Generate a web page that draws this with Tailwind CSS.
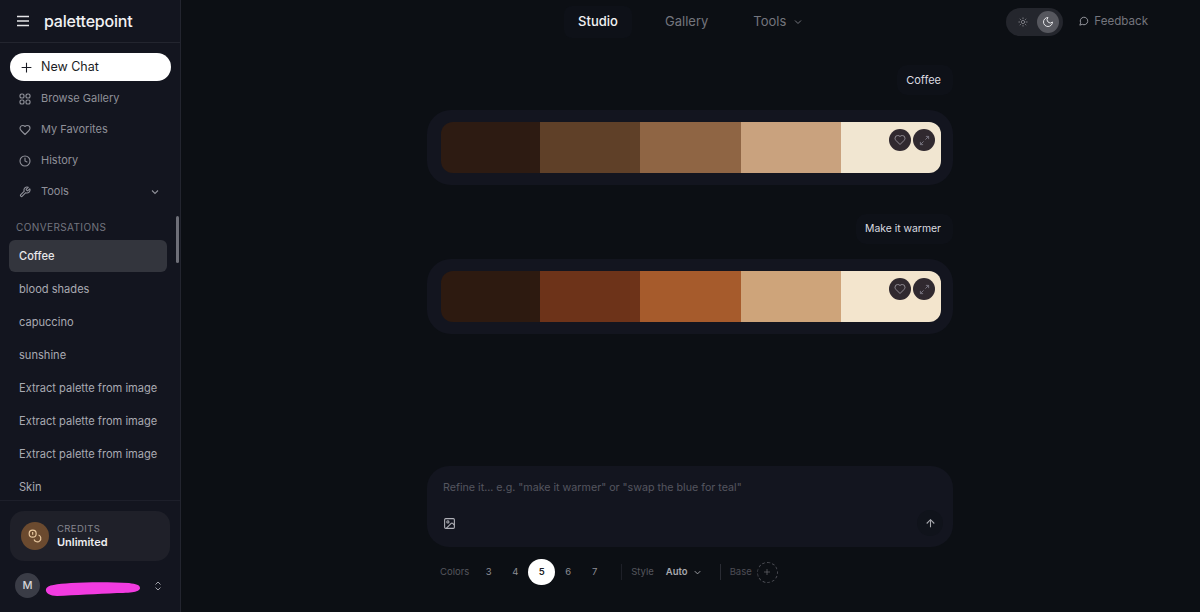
<!DOCTYPE html>
<html lang="en">
<head>
    <meta charset="UTF-8">
    <meta name="viewport" content="width=device-width, initial-scale=1.0">
    <title>palettepoint</title>
    <script src="https://cdn.jsdelivr.net/npm/@tailwindcss/browser@4"></script>
</head>
<body class="h-screen overflow-hidden bg-[#0c0f14] text-white font-[Inter,sans-serif]">
<div class="flex h-[612px]">

    <!-- Sidebar -->
    <aside class="relative flex w-[181px] shrink-0 flex-col border-r border-[#23252f] bg-[#13151f]">
        <div class="flex h-[43px] shrink-0 items-center gap-[14px] border-b border-[#23252f] pl-[16px]">
            <svg class="h-[14px] w-[14px] text-[#e5e5e8]" viewBox="0 0 14 14" fill="none" stroke="currentColor" stroke-width="1.4"><path d="M1 2.5h12M1 7h12M1 11.5h12"/></svg>
            <span class="text-[16px] font-medium tracking-[-0.2px] text-[#f1f1f3]">palettepoint</span>
        </div>

        <div class="flex shrink-0 flex-col px-[10px] pt-[10px]">
            <button class="flex h-[28px] w-[161px] items-center gap-[8px] rounded-full bg-white pl-[10px] pt-[1px] text-[12.5px] text-[#1a1c24]">
                <svg class="h-[13px] w-[13px]" viewBox="0 0 24 24" fill="none" stroke="currentColor" stroke-width="2"><path d="M12 3v18M3 12h18"/></svg>
                New Chat
            </button>
            <nav class="mt-[2px] flex flex-col text-[11px] text-[#8f9099]">
                <a class="flex h-[31px] items-center gap-[10px] pl-[9px]">
                    <svg class="h-[12px] w-[12px]" viewBox="0 0 12 12" fill="none" stroke="currentColor" stroke-width="1.2"><rect x="1" y="1" width="4" height="4" rx="1.6"/><rect x="7" y="1" width="4" height="4" rx="1.6"/><rect x="1" y="7" width="4" height="4" rx="1.6"/><rect x="7" y="7" width="4" height="4" rx="1.6"/></svg>
                    Browse Gallery
                </a>
                <a class="flex h-[31px] items-center gap-[10px] pl-[9px]">
                    <svg class="h-[12px] w-[12px]" viewBox="0 0 24 24" fill="none" stroke="currentColor" stroke-width="2.2" stroke-linejoin="round"><path d="M19 14c1.49-1.46 3-3.21 3-5.5A5.5 5.5 0 0 0 16.5 3c-1.76 0-3 .5-4.5 2-1.5-1.5-2.74-2-4.5-2A5.5 5.5 0 0 0 2 8.5c0 2.3 1.5 4.05 3 5.5l7 7Z"/></svg>
                    My Favorites
                </a>
                <a class="flex h-[31px] items-center gap-[10px] pl-[9px]">
                    <svg class="h-[12px] w-[12px]" viewBox="0 0 24 24" fill="none" stroke="currentColor" stroke-width="2.2" stroke-linecap="round"><circle cx="12" cy="12" r="10"/><path d="M12 6v6l4 2"/></svg>
                    History
                </a>
                <a class="flex h-[31px] items-center gap-[10px] pl-[9px] pr-[9px]">
                    <svg class="h-[12px] w-[12px]" viewBox="0 0 24 24" fill="none" stroke="currentColor" stroke-width="2.2" stroke-linejoin="round"><path d="M14.7 6.3a1 1 0 0 0 0 1.4l1.6 1.6a1 1 0 0 0 1.4 0l3.77-3.77a6 6 0 0 1-7.94 7.94l-6.91 6.91a2.12 2.12 0 0 1-3-3l6.91-6.91a6 6 0 0 1 7.94-7.94l-3.76 3.76z"/></svg>
                    Tools
                    <svg class="ml-auto h-[12px] w-[12px]" viewBox="0 0 24 24" fill="none" stroke="currentColor" stroke-width="2.2"><path d="m6 9 6 6 6-6"/></svg>
                </a>
            </nav>
        </div>

        <div class="relative flex min-h-0 flex-1 flex-col overflow-hidden pl-[9px] pr-[13px]">
            <p class="mt-[13px] pl-[7px] text-[10px] leading-[14px] tracking-[0.4px] text-[#74757f]">CONVERSATIONS</p>
            <ul class="mt-[6px] flex flex-col text-[11.1px] text-[#a9aab2]">
                <li class="flex h-[32px] items-center rounded-[6px] bg-[#33353d] pl-[10px] font-medium text-[#e8e8eb]">Coffee</li>
                <li class="mt-[1px] flex h-[33px] items-center pl-[10px]">blood shades</li>
                <li class="flex h-[33px] items-center pl-[10px]">capuccino</li>
                <li class="flex h-[33px] items-center pl-[10px]">sunshine</li>
                <li class="flex h-[33px] items-center whitespace-nowrap pl-[10px]">Extract palette from image</li>
                <li class="flex h-[33px] items-center whitespace-nowrap pl-[10px]">Extract palette from image</li>
                <li class="flex h-[33px] items-center whitespace-nowrap pl-[10px]">Extract palette from image</li>
                <li class="flex h-[33px] items-center pl-[10px]">Skin</li>
            </ul>
            <span class="absolute right-[1px] top-[9px] h-[47px] w-[3px] rounded-full bg-[#6e6f78]"></span>
        </div>

        <div class="shrink-0 border-t border-[#1d1f2a] px-[10px] pb-[14px] pt-[10px]">
            <div class="flex h-[50px] items-center gap-[8px] rounded-[14px] bg-[#1f2029] pl-[11px]">
                <span class="flex h-[28px] w-[28px] items-center justify-center rounded-full bg-[#6b4a2f] text-[#eac9a0]">
                    <svg class="h-[14px] w-[14px]" viewBox="0 0 24 24" fill="none" stroke="currentColor" stroke-width="2"><circle cx="8" cy="8" r="6"/><path d="M18.09 10.37A6 6 0 1 1 10.34 18"/><path d="M7 6h1v4"/></svg>
                </span>
                <div class="mt-[-1px] flex flex-col">
                    <span class="text-[9.5px] leading-[13px] tracking-[0.4px] text-[#85868f]">CREDITS</span>
                    <span class="text-[11px] font-semibold leading-[15px] text-[#ededf0]">Unlimited</span>
                </div>
            </div>
            <div class="mt-[12px] flex h-[25px] items-center pl-[5px] pr-[6px]">
                <span class="flex h-[25px] w-[25px] items-center justify-center rounded-full bg-[#3a3c46] text-[11px] font-medium text-[#d4d4d8]">M</span>
                <svg class="ml-[5px] h-[20px] w-[96px]" viewBox="0 0 96 20"><path d="M1 13C2 9 12 8 26 7C44 6 66 6 84 7C91 8 95 9 95 12C95 15 90 17 72 17C52 18 30 19 12 20C5 20 0 17 1 13Z" fill="#f23be0"/></svg>
                <svg class="ml-auto h-[12px] w-[12px] text-[#a0a1a9]" viewBox="0 0 24 24" fill="none" stroke="currentColor" stroke-width="2"><path d="m7 15 5 5 5-5"/><path d="m7 9 5-5 5 5"/></svg>
            </div>
        </div>
    </aside>

    <!-- Main -->
    <main class="relative flex min-w-0 flex-1 flex-col items-center">
        <header class="relative flex h-[43px] w-full shrink-0 items-center">
            <nav class="ml-[383px] flex items-center text-[13px]">
                <a class="flex h-[32px] w-[68px] items-center justify-center rounded-[8px] bg-[#0e1118] font-medium text-[#f1f1f3]">Studio</a>
                <a class="ml-[33px] text-[#74757d]">Gallery</a>
                <a class="ml-[45px] flex items-center gap-[6px] text-[#74757d]">
                    Tools
                    <svg class="h-[12px] w-[12px]" viewBox="0 0 24 24" fill="none" stroke="currentColor" stroke-width="2"><path d="m6 9 6 6 6-6"/></svg>
                </a>
            </nav>
            <div class="ml-auto mr-[52px] flex items-center">
                <div class="flex h-[28px] w-[57px] items-center justify-between rounded-full bg-[#24262d] pl-[12px] pr-[4px]">
                    <svg class="h-[10px] w-[10px] text-[#85868d]" viewBox="0 0 24 24" fill="none" stroke="currentColor" stroke-width="2" stroke-linecap="round"><circle cx="12" cy="12" r="4"/><path d="M12 2v2M12 20v2M4.93 4.93l1.41 1.41M17.66 17.66l1.41 1.41M2 12h2M20 12h2M6.34 17.66l-1.41 1.41M19.07 4.93l-1.41 1.41"/></svg>
                    <span class="flex h-[22px] w-[22px] items-center justify-center rounded-full bg-[#56575e] text-[#e4e4e7]">
                        <svg class="h-[12px] w-[12px]" viewBox="0 0 24 24" fill="none" stroke="currentColor" stroke-width="2"><path d="M12 3a6 6 0 0 0 9 9 9 9 0 1 1-9-9Z"/></svg>
                    </span>
                </div>
                <a class="ml-[16px] flex items-center gap-[5px] text-[11.6px] text-[#74757d]">
                    <svg class="h-[10px] w-[10px] text-[#a0a1a8]" viewBox="0 0 24 24" fill="none" stroke="currentColor" stroke-width="2.2"><path d="M7.9 20A9 9 0 1 0 4 16.1L2 22Z"/></svg>
                    Feedback
                </a>
            </div>
        </header>

        <div class="ml-[-1px] flex min-h-0 w-[526px] flex-1 flex-col">
            <div class="mt-[22px] flex justify-end">
                <span class="flex h-[30px] items-center rounded-[10px] bg-[#0e1118] pl-[9px] pr-[12px] text-[11px] text-[#dcdce0]">Coffee</span>
            </div>
            <div class="mt-[15px] rounded-[24px] bg-[#13151f] pb-[12px] pl-[14px] pr-[12px] pt-[12px]">
                <div class="relative flex h-[51px] overflow-hidden rounded-[12px]">
                    <div class="w-[99px] shrink-0 bg-[#2d1b12]"></div>
                    <div class="flex-1 bg-[#5f4028]"></div>
                    <div class="flex-1 bg-[#8f6544]"></div>
                    <div class="flex-1 bg-[#c9a27e]"></div>
                    <div class="flex-1 bg-[#f1e6d1]"></div>
                    <div class="absolute right-[6px] top-[7px] flex gap-[2px]">
                        <span class="flex h-[22px] w-[22px] items-center justify-center rounded-full bg-[#30292f] text-[#8d8991]">
                            <svg class="h-[12px] w-[12px]" viewBox="0 0 24 24" fill="none" stroke="currentColor" stroke-width="2"><path d="M19 14c1.49-1.46 3-3.21 3-5.5A5.5 5.5 0 0 0 16.5 3c-1.76 0-3 .5-4.5 2-1.5-1.5-2.74-2-4.5-2A5.5 5.5 0 0 0 2 8.5c0 2.3 1.5 4.05 3 5.5l7 7Z"/></svg>
                        </span>
                        <span class="flex h-[22px] w-[22px] items-center justify-center rounded-full bg-[#30292f] text-[#7c7884]">
                            <svg class="h-[11px] w-[11px]" viewBox="0 0 24 24" fill="none" stroke="currentColor" stroke-width="2"><path d="M15 3h6v6"/><path d="m21 3-7 7"/><path d="m3 21 7-7"/><path d="M9 21H3v-6"/></svg>
                        </span>
                    </div>
                </div>
            </div>

            <div class="mt-[29px] flex justify-end">
                <span class="flex h-[30px] items-center rounded-[10px] bg-[#0e1118] pl-[9px] pr-[12px] text-[10.4px] text-[#dcdce0]">Make it warmer</span>
            </div>
            <div class="mt-[15px] rounded-[24px] bg-[#13151f] pb-[12px] pl-[14px] pr-[12px] pt-[12px]">
                <div class="relative flex h-[51px] overflow-hidden rounded-[12px]">
                    <div class="w-[99px] shrink-0 bg-[#2d1a10]"></div>
                    <div class="flex-1 bg-[#6d3319]"></div>
                    <div class="flex-1 bg-[#a65b2c]"></div>
                    <div class="flex-1 bg-[#cea47a]"></div>
                    <div class="flex-1 bg-[#f3e5cd]"></div>
                    <div class="absolute right-[6px] top-[7px] flex gap-[2px]">
                        <span class="flex h-[22px] w-[22px] items-center justify-center rounded-full bg-[#30292f] text-[#8d8991]">
                            <svg class="h-[12px] w-[12px]" viewBox="0 0 24 24" fill="none" stroke="currentColor" stroke-width="2"><path d="M19 14c1.49-1.46 3-3.21 3-5.5A5.5 5.5 0 0 0 16.5 3c-1.76 0-3 .5-4.5 2-1.5-1.5-2.74-2-4.5-2A5.5 5.5 0 0 0 2 8.5c0 2.3 1.5 4.05 3 5.5l7 7Z"/></svg>
                        </span>
                        <span class="flex h-[22px] w-[22px] items-center justify-center rounded-full bg-[#30292f] text-[#7c7884]">
                            <svg class="h-[11px] w-[11px]" viewBox="0 0 24 24" fill="none" stroke="currentColor" stroke-width="2"><path d="M15 3h6v6"/><path d="m21 3-7 7"/><path d="m3 21 7-7"/><path d="M9 21H3v-6"/></svg>
                        </span>
                    </div>
                </div>
            </div>

            <div class="flex-1"></div>

            <div class="flex h-[81px] shrink-0 flex-col justify-between rounded-[22px] bg-[#13151f] pb-[11px] pl-[16px] pr-[10px] pt-[14px]">
                <p class="text-[10.7px] leading-[16px] text-[#55565f]">Refine it... e.g. "make it warmer" or "swap the blue for teal"</p>
                <div class="flex items-center justify-between">
                    <svg class="h-[13px] w-[13px] text-[#b0b1b8]" viewBox="0 0 24 24" fill="none" stroke="currentColor" stroke-width="2"><rect x="3" y="3" width="18" height="18" rx="2"/><circle cx="9" cy="9" r="2"/><path d="m21 15-3.086-3.086a2 2 0 0 0-2.828 0L6 21"/></svg>
                    <span class="flex h-[26px] w-[26px] items-center justify-center rounded-full bg-[#10131b] text-[#a7a8ae]">
                        <svg class="h-[13px] w-[13px]" viewBox="0 0 24 24" fill="none" stroke="currentColor" stroke-width="2"><path d="m5 12 7-7 7 7"/><path d="M12 19V5"/></svg>
                    </span>
                </div>
            </div>

            <div class="mb-[27px] mt-[12px] flex h-[26px] shrink-0 items-center pl-[13px] text-[9.5px]">
                <span class="mr-[6px] text-[#55565d]">Colors</span>
                <div class="flex items-center text-[#8d8e94]">
                    <span class="flex h-[26px] w-[27px] items-center justify-center">3</span>
                    <span class="flex h-[26px] w-[26px] items-center justify-center">4</span>
                    <span class="flex h-[26px] w-[27px] items-center justify-center rounded-full bg-white font-semibold text-[#1a1c24]">5</span>
                    <span class="flex h-[26px] w-[26px] items-center justify-center">6</span>
                    <span class="flex h-[26px] w-[27px] items-center justify-center">7</span>
                </div>
                <span class="ml-[13px] h-[16px] w-px bg-[#1e2028]"></span>
                <span class="ml-[9px] text-[#55565d]">Style</span>
                <span class="ml-[12px] flex items-center gap-[4px] font-semibold text-[#a7a8ae]">
                    Auto
                    <svg class="h-[11px] w-[11px]" viewBox="0 0 24 24" fill="none" stroke="currentColor" stroke-width="2"><path d="m6 9 6 6 6-6"/></svg>
                </span>
                <span class="ml-[17px] h-[16px] w-px bg-[#2a2c34]"></span>
                <span class="ml-[9px] text-[#4c4d54]">Base</span>
                <span class="ml-[5px] flex h-[21px] w-[21px] items-center justify-center rounded-full border border-dashed border-[#4a4b52] text-[#6c6d74]">
                    <svg class="h-[8px] w-[8px]" viewBox="0 0 24 24" fill="none" stroke="currentColor" stroke-width="2"><path d="M12 3v18M3 12h18"/></svg>
                </span>
            </div>
        </div>
    </main>
</div>
</body>
</html>
